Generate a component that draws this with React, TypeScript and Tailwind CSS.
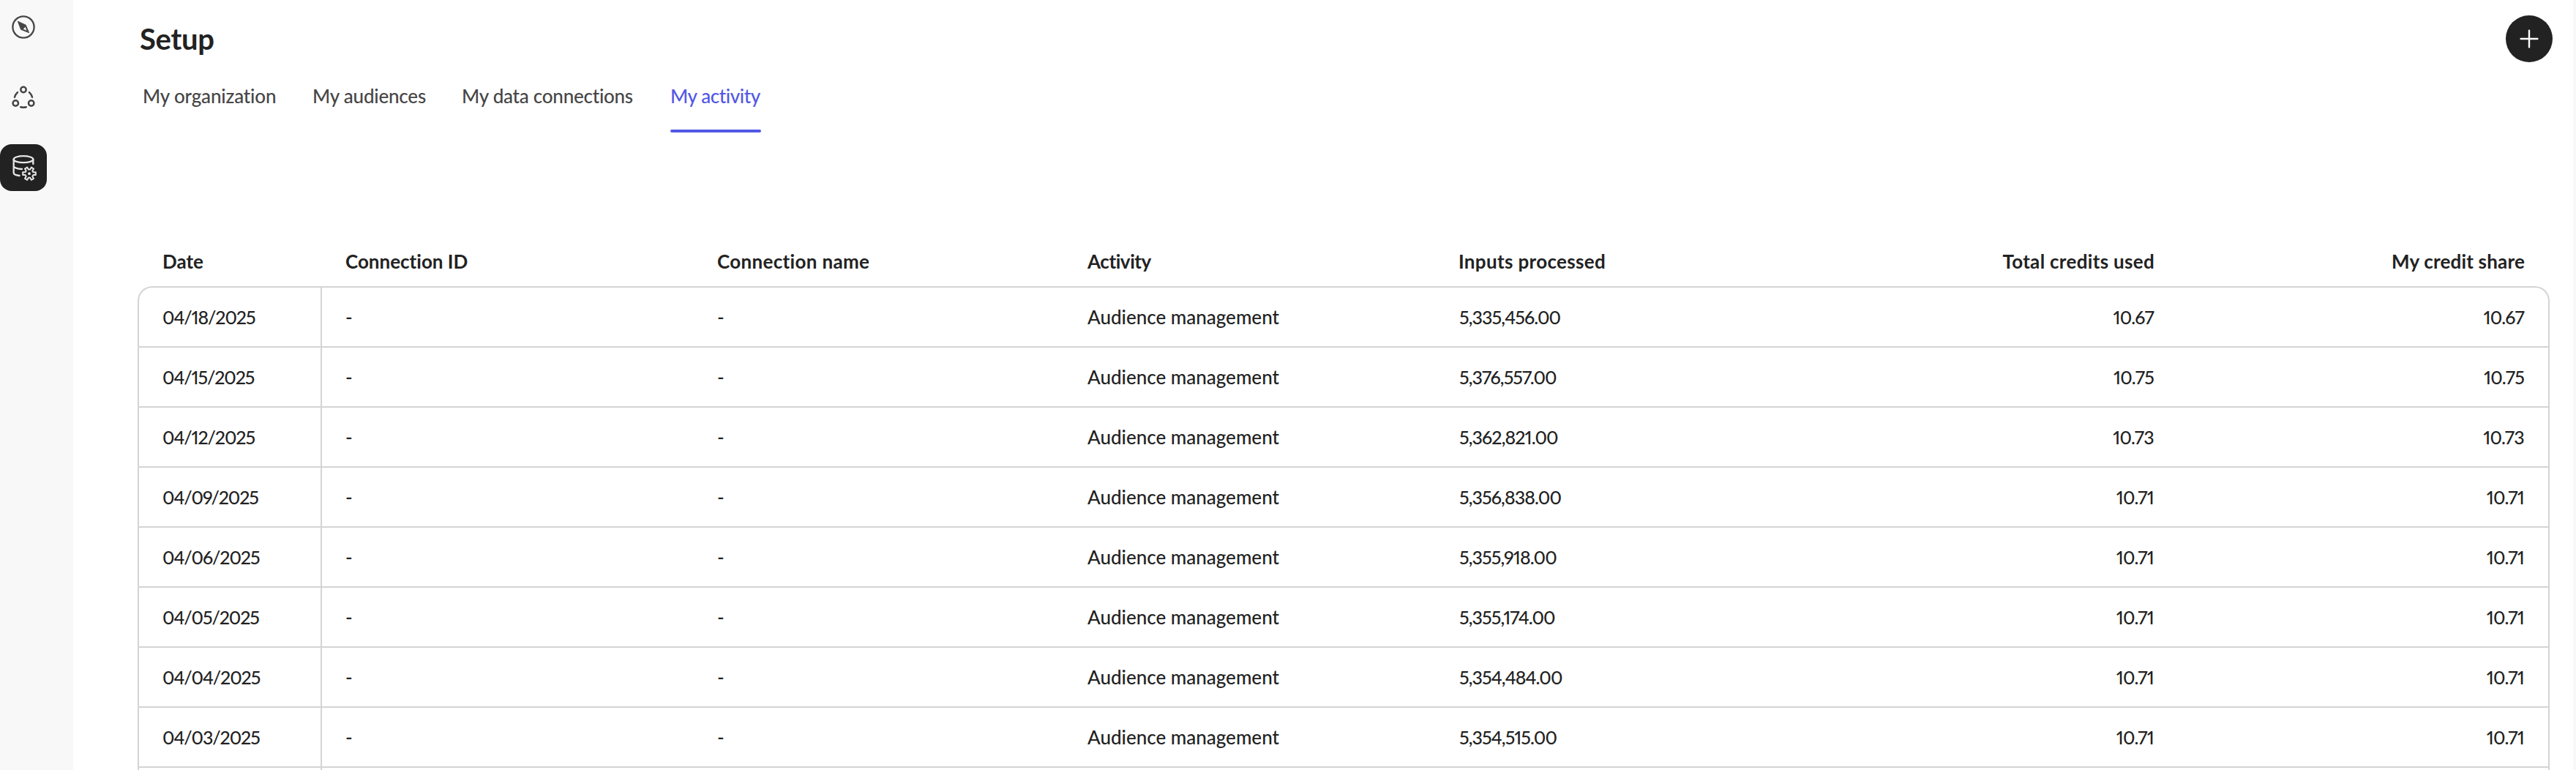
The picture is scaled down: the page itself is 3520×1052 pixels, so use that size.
const rows: [string, string, string][] = [
  ["04/18/2025", "5,335,456.00", "10.67"],
  ["04/15/2025", "5,376,557.00", "10.75"],
  ["04/12/2025", "5,362,821.00", "10.73"],
  ["04/09/2025", "5,356,838.00", "10.71"],
  ["04/06/2025", "5,355,918.00", "10.71"],
  ["04/05/2025", "5,355,174.00", "10.71"],
  ["04/04/2025", "5,354,484.00", "10.71"],
  ["04/03/2025", "5,354,515.00", "10.71"],
  ["", "", ""],
];

// Six-toothed gear outline centred on (cx, cy)
function gearPath(cx: number, cy: number, inner: number, outer: number) {
  const points: string[] = [];
  for (let i = 0; i < 6; i++) {
    const corners: [number, number][] = [
      [-19, inner],
      [-12, outer],
      [12, outer],
      [19, inner],
    ];
    for (const [offset, radius] of corners) {
      const angle = ((i * 60 + offset) * Math.PI) / 180;
      points.push(
        `${(cx + radius * Math.cos(angle)).toFixed(2)} ${(cy + radius * Math.sin(angle)).toFixed(2)}`,
      );
    }
  }
  return `M${points.join("L")}Z`;
}

function CompassIcon() {
  return (
    <svg viewBox="0 0 64 64" className="size-16" fill="none">
      <circle cx="32" cy="32" r="14.6" stroke="#464646" strokeWidth="2.3" />
      <path
        fillRule="evenodd"
        fill="#464646"
        stroke="#464646"
        strokeWidth="1"
        strokeLinejoin="round"
        d="M24.4 24.2L35.2 29.2L39.6 39.7L28.6 35.3ZM34.8 31L31 35L37.2 37.4Z"
      />
    </svg>
  );
}

function NetworkIcon() {
  return (
    <svg viewBox="0 0 64 64" className="size-16" fill="none" stroke="#464646" strokeWidth="2.5" strokeLinecap="round">
      <circle cx="32" cy="21.5" r="3.7" />
      <circle cx="21.3" cy="40" r="3.7" />
      <circle cx="42.7" cy="40" r="3.7" />
      <path d="M24 25.2Q21 28 20 31.8M40 25.2Q43 28 44 31.8M28.2 45.2Q32 46.2 35.8 45.2" />
    </svg>
  );
}

function DatabaseGearIcon() {
  return (
    <svg
      viewBox="0 0 64 64"
      className="size-16"
      fill="none"
      stroke="#e6e6e6"
      strokeWidth="2.3"
      strokeLinecap="round"
      strokeLinejoin="round"
    >
      <ellipse cx="32" cy="20.7" rx="13.3" ry="4.5" />
      <path d="M18.7 20.7V39.3C18.7 41 22 42.5 26.6 43M18.7 30C18.7 31.8 23.5 33.7 30 34M45.3 20.7V27" />
      <path strokeWidth="2" d={gearPath(40, 40.2, 5.7, 9)} />
      <circle cx="40" cy="40.2" r="1.9" fill="#e6e6e6" stroke="none" />
    </svg>
  );
}

const columns =
  "grid grid-cols-[250px_507px_507px_507px_507px_507px_507px] items-center";

export default function App() {
  return (
    <div className="flex h-[1052px] w-[3520px] overflow-hidden bg-white font-['Lato',sans-serif] text-[26px] font-medium text-[#222222] no-common-ligatures [font-variant-ligatures:none]">
      <aside className="flex w-[100px] shrink-0 flex-col gap-8 bg-[#f8f8f8] pt-[5px]">
        <button className="size-16">
          <CompassIcon />
        </button>
        <button className="size-16">
          <NetworkIcon />
        </button>
        <button className="size-16 rounded-2xl bg-[#222222]">
          <DatabaseGearIcon />
        </button>
      </aside>

      <main className="flex min-w-0 flex-1 flex-col">
        <header className="flex h-[85px] items-start justify-between pr-7 pl-[91px]">
          <h1 className="pt-[29px] text-[40px] leading-[48px] font-bold tracking-[-0.3px]">Setup</h1>
          <button className="mt-[21px] flex size-16 items-center justify-center rounded-full bg-[#222222]">
            <svg viewBox="0 0 32 32" className="size-8" stroke="white" strokeWidth="2.4" strokeLinecap="round">
              <path d="M16 4.6V27.4M4.6 16H27.4" />
            </svg>
          </button>
        </header>

        <nav className="flex h-24 gap-12 pl-[95px] leading-[92px] whitespace-nowrap text-[#464646]">
          <a className="w-[184px] tracking-[-0.15px]">My organization</a>
          <a className="w-[156px] tracking-[-0.2px]">My audiences</a>
          <a className="w-[237px] tracking-[-0.24px]">My data connections</a>
          <a className="flex w-[124px] flex-col tracking-[-0.4px] text-[#5258e4]">
            My activity
            <span className="h-1 w-full rounded-full bg-[#5258e4]" />
          </a>
        </nav>

        <section className="mt-[142px] ml-[88px] w-[3296px]">
          <div className={`${columns} h-[68px] pl-0.5 leading-[68px] font-bold whitespace-nowrap`}>
            <div className="pl-8">Date</div>
            <div className="pl-8">Connection ID</div>
            <div className="pl-[33px] tracking-[0.33px]">Connection name</div>
            <div className="pl-8 tracking-[-0.42px]">Activity</div>
            <div className="pl-8 tracking-[0.34px]">Inputs processed</div>
            <div className="pr-[31px] text-right tracking-[0.31px]">Total credits used</div>
            <div className="pr-[32px] text-right tracking-[0.18px]">My credit share</div>
          </div>
          <div className="overflow-hidden rounded-t-[20px] border-2 border-b-0 border-[#d4d4d4]">
            {rows.map(([date, inputs, credits], i) => (
              <div key={i} className={`${columns} h-[82px] border-b-2 border-[#d4d4d4] leading-[80px] whitespace-nowrap`}>
                <div className="h-20 border-r-2 border-[#d4d4d4] pl-8 text-[25px] tracking-[-1.1px] proportional-nums">
                  {date}
                </div>
                <div className="pl-8">{date && "-"}</div>
                <div className="pl-[33px]">{date && "-"}</div>
                <div className="pl-8">{date && "Audience management"}</div>
                <div className="pl-[33px] text-[25px] tracking-[-0.9px] proportional-nums">{inputs}</div>
                <div className="pr-[32px] text-right text-[25px] tracking-[-0.8px] proportional-nums">{credits}</div>
                <div className="pr-[33px] text-right text-[25px] tracking-[-0.8px] proportional-nums">{credits}</div>
              </div>
            ))}
          </div>
        </section>
      </main>

      <div className="w-1 shrink-0 bg-[#f8f8f8]" />
    </div>
  );
}
